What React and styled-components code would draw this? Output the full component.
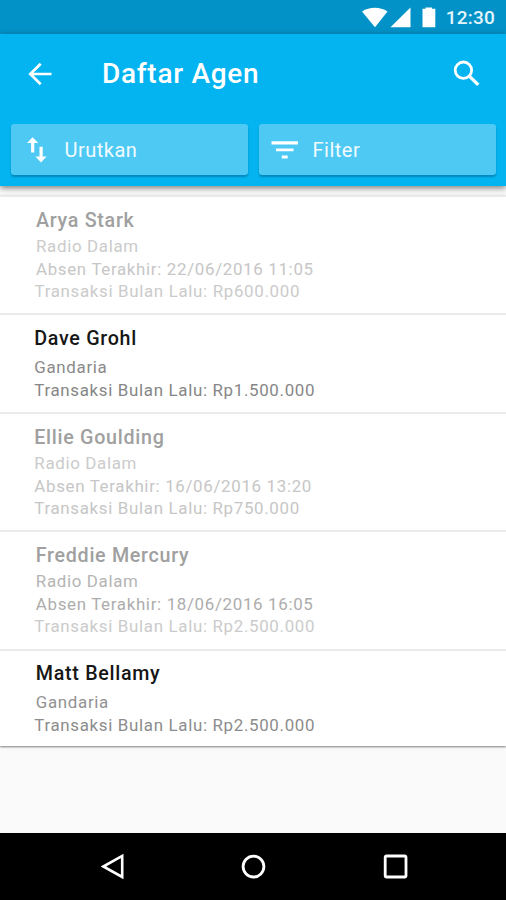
import React from 'react';
import styled, { createGlobalStyle } from 'styled-components';

const GlobalStyle = createGlobalStyle`
  * { box-sizing: border-box; }
  body {
    margin: 0;
    background: #fafafa;
    font-family: Roboto, 'Liberation Sans', sans-serif;
  }
  svg { display: block; flex: none; }
`;

const Screen = styled.div`
  display: flex;
  flex-direction: column;
  width: 506px;
  height: 900px;
  overflow: hidden;
  background: #fafafa;
`;

const StatusBar = styled.div`
  flex: none;
  display: flex;
  justify-content: flex-end;
  height: 34px;
  padding-right: 11px;
  background: #0292c7;
`;

const Clock = styled.span`
  margin-left: 10px;
  color: #e3f5fc;
  font-size: 19px;
  font-weight: 500;
  line-height: 36px;
  letter-spacing: 0.2px;
`;

const Header = styled.header`
  flex: none;
  height: 152px;
  background: #03b4f0;
  box-shadow: 0 2px 6px rgba(0, 0, 0, 0.5);
  z-index: 1;
`;

const Toolbar = styled.div`
  display: flex;
  align-items: center;
  height: 79px;
  padding: 0 26px 0 28px;
`;

const Title = styled.h1`
  flex: 1;
  margin: 0 0 0 50px;
  color: #fff;
  font-size: 28px;
  font-weight: 500;
  line-height: 34px;
  letter-spacing: 0.7px;
`;

const Actions = styled.div`
  display: flex;
  gap: 11px;
  padding: 11px 10px 0 11px;
`;

const ActionButton = styled.button`
  flex: 1;
  display: flex;
  align-items: center;
  height: 51px;
  padding: 0 0 0 12px;
  border: 0;
  border-radius: 3px;
  background: #4ec9f4;
  box-shadow: 0 2px 2px rgba(0, 70, 110, 0.4);
  color: #f1fbff;
  font-family: inherit;
  font-size: 20px;
  line-height: 24px;
  letter-spacing: 0.5px;
`;

const ActionLabel = styled.span`
  margin-left: 13.5px;
`;

const List = styled.main`
  flex: none;
  margin-top: 9px;
  background: #fff;
  box-shadow: 0 1px 2px rgba(0, 0, 0, 0.5);
`;

const Row = styled.article`
  height: ${(p) => p.$height}px;
  padding: ${(p) => p.$top || 12}px 0 0 ${(p) => p.$indent}px;
  border-top: 2px solid #ebebeb;
  white-space: nowrap;
`;

const Name = styled.h2`
  margin: 0 0 ${(p) => (p.$active ? 5 : 2)}px;
  color: ${(p) => (p.$active ? '#161616' : '#a0a0a0')};
  font-size: 19.7px;
  font-weight: 500;
  line-height: 24px;
  letter-spacing: 0.7px;
`;

const Detail = styled.p`
  margin: 0 0 0 ${(p) => (p.$outdent ? -1.5 : 0)}px;
  color: ${(p) => p.$color};
  font-size: 16.9px;
  line-height: 22.5px;
  letter-spacing: 0.67px;
`;

const NavBar = styled.nav`
  flex: none;
  display: flex;
  align-items: center;
  justify-content: space-between;
  height: 67px;
  margin-top: auto;
  padding: 0 98px 0 101px;
  background: #000;
`;

const agents = [
  {
    name: 'Arya Stark', height: 118, indent: 36,
    details: [
      ['Radio Dalam', '#cbcbcb'],
      ['Absen Terakhir: 22/06/2016 11:05', '#c6c6c6'],
      ['Transaksi Bulan Lalu: Rp600.000', '#cbcbcb', true],
    ],
  },
  {
    name: 'Dave Grohl', height: 99, indent: 34.3, active: true,
    details: [
      ['Gandaria', '#8a8a8a'],
      ['Transaksi Bulan Lalu: Rp1.500.000', '#868686'],
    ],
  },
  {
    name: 'Ellie Goulding', height: 118, indent: 34.3,
    details: [
      ['Radio Dalam', '#cbcbcb'],
      ['Absen Terakhir: 16/06/2016 13:20', '#c6c6c6'],
      ['Transaksi Bulan Lalu: Rp750.000', '#c6c6c6'],
    ],
  },
  {
    name: 'Freddie Mercury', height: 119, indent: 35.8,
    details: [
      ['Radio Dalam', '#b4b4b4'],
      ['Absen Terakhir: 18/06/2016 16:05', '#adadad'],
      ['Transaksi Bulan Lalu: Rp2.500.000', '#cbcbcb', true],
    ],
  },
  {
    name: 'Matt Bellamy', height: 97, indent: 35.8, top: 11, active: true,
    details: [
      ['Gandaria', '#929292'],
      ['Transaksi Bulan Lalu: Rp2.500.000', '#8c8c8c', true],
    ],
  },
];

const StatusIcons = () => (
  <svg width="74" height="34" viewBox="0 0 74 34" fill="#fff">
    <path d="M0 11.4C7.5 6.5 18 6.5 25.5 11.4L13 27.2Z" />
    <path d="M48.5 7.5V27.3H28.5Z" />
    <path d="M60.5 8.8H63.5V7.4H70V8.8H73.3V27.3H60.5Z" />
  </svg>
);

const BackIcon = () => (
  <svg width="24" height="24" viewBox="0 0 24 24" fill="none" stroke="#fff" strokeWidth="2.7">
    <path d="M12.7 1.7L2.3 12L12.7 22.3M2.5 12H23.5" />
  </svg>
);

const SearchIcon = () => (
  <svg width="27" height="27" viewBox="0 0 27 27" fill="none" stroke="#fff">
    <circle cx="10.4" cy="10.2" r="8.2" strokeWidth="2.8" />
    <path d="M16.3 16.1L25.3 24.9" strokeWidth="3.3" />
  </svg>
);

const SortIcon = () => (
  <svg width="28" height="28" viewBox="0 0 28 28" fill="#fff">
    <path d="M9.6 1.2L15.3 7.1H11.3V16.5H8.1V7.1H4Z" />
    <path d="M18 26.5L12.4 20.5H16.5V10.8H19.7V20.5H23.5Z" />
  </svg>
);

const FilterIcon = () => (
  <svg width="28" height="28" viewBox="0 0 28 28" fill="#fff">
    <path d="M0.5 5.3H27V8.4H0.5ZM5 12.4H22.5V15.2H5ZM10.8 19.4H16.7V22.4H10.8Z" />
  </svg>
);

const NavBack = () => (
  <svg width="24" height="28" viewBox="0 0 24 28" fill="none" stroke="#fff" strokeWidth="2.6">
    <path d="M21.2 2.9V24L2.4 13.5Z" />
  </svg>
);

const NavHome = () => (
  <svg width="26" height="28" viewBox="0 0 26 28" fill="none" stroke="#fff" strokeWidth="2.8">
    <circle cx="12.5" cy="13.6" r="10.4" />
  </svg>
);

const NavRecents = () => (
  <svg width="26" height="28" viewBox="0 0 26 28" fill="none" stroke="#fff" strokeWidth="2.8">
    <rect x="3.2" y="3" width="20.8" height="21" rx="1.5" />
  </svg>
);

const App = () => (
  <>
    <GlobalStyle />
    <Screen>
      <StatusBar>
        <StatusIcons />
        <Clock>12:30</Clock>
      </StatusBar>
      <Header>
        <Toolbar>
          <BackIcon />
          <Title>Daftar Agen</Title>
          <SearchIcon />
        </Toolbar>
        <Actions>
          <ActionButton>
            <SortIcon />
            <ActionLabel>Urutkan</ActionLabel>
          </ActionButton>
          <ActionButton>
            <FilterIcon />
            <ActionLabel>Filter</ActionLabel>
          </ActionButton>
        </Actions>
      </Header>
      <List>
        {agents.map((agent) => (
          <Row key={agent.name} $height={agent.height} $indent={agent.indent} $top={agent.top}>
            <Name $active={agent.active}>{agent.name}</Name>
            {agent.details.map(([text, color, outdent]) => (
              <Detail key={text} $color={color} $outdent={outdent}>{text}</Detail>
            ))}
          </Row>
        ))}
      </List>
      <NavBar>
        <NavBack />
        <NavHome />
        <NavRecents />
      </NavBar>
    </Screen>
  </>
);

export default App;
